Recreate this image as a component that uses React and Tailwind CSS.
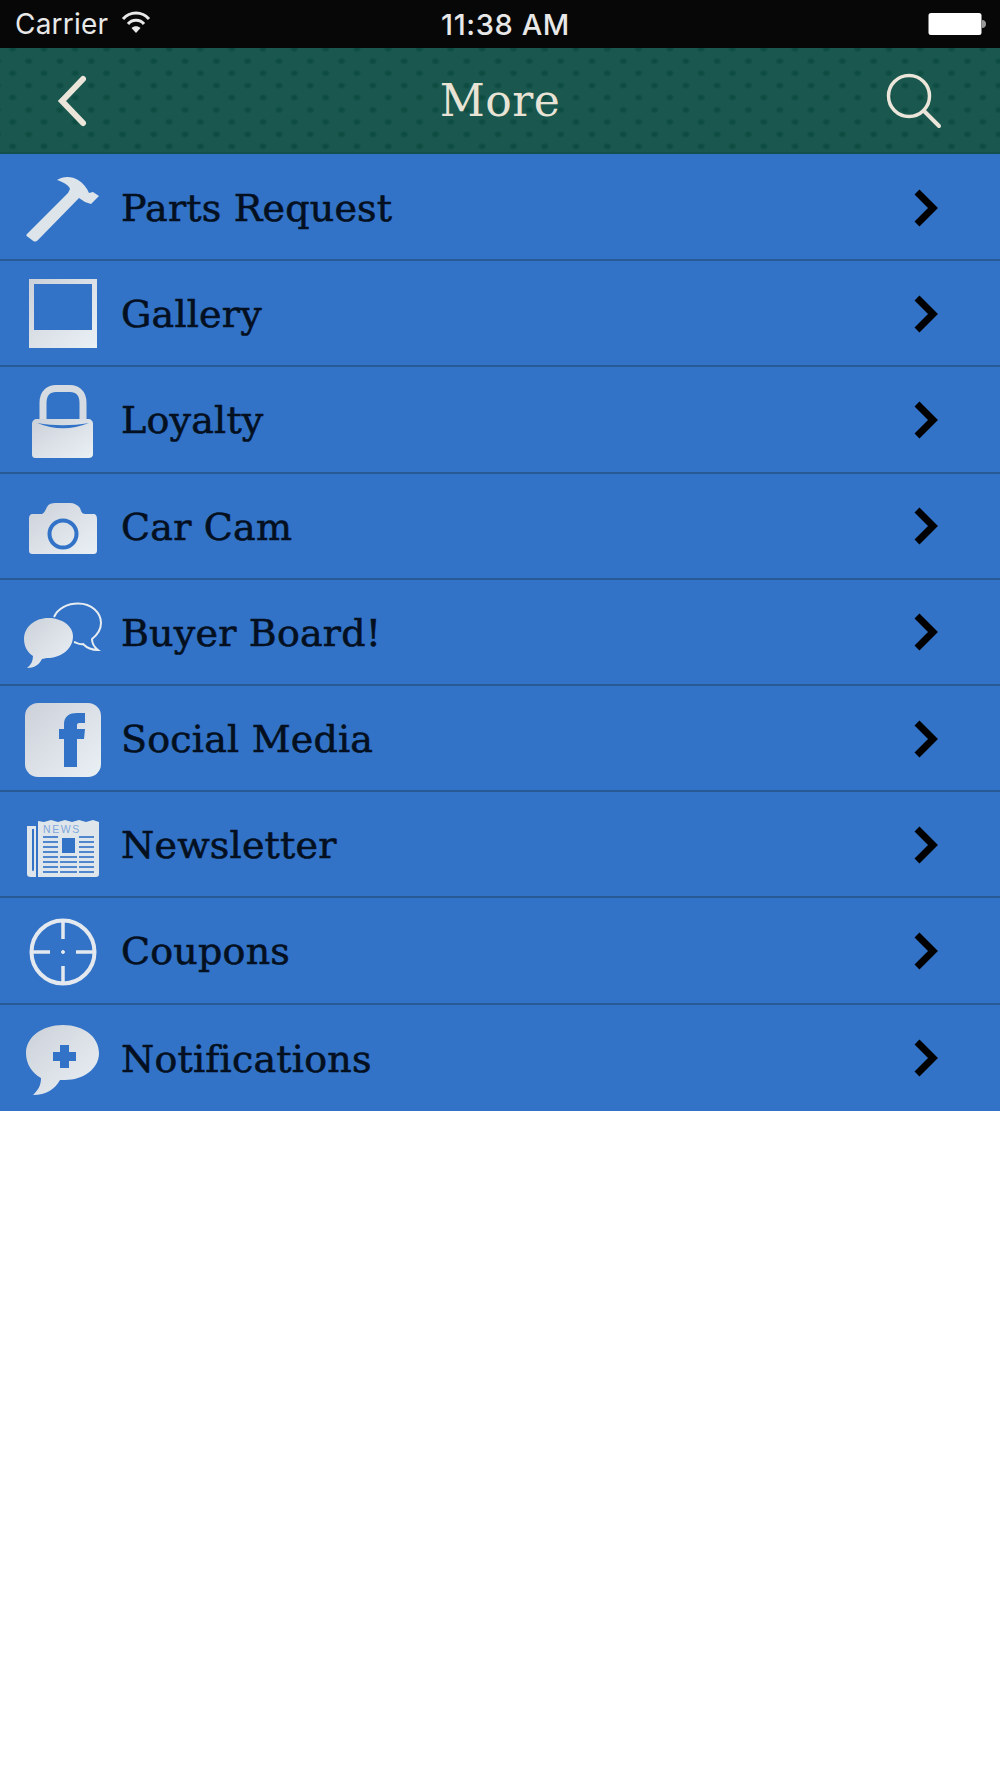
import React from "react";

const slab = "font-['DejaVu_Serif','Liberation_Serif',serif]";

function Grad({ id }) {
  return (
    <defs>
      <linearGradient id={id} x1="0" y1="0" x2="1" y2="1">
        <stop offset="0" stopColor="#ccd1d9" />
        <stop offset="1" stopColor="#eaf1f5" />
      </linearGradient>
    </defs>
  );
}

function Hammer() {
  return (
    <path
      d="M27 79 L68 38 L70 34 C69 30 63 27 57 25 C63 21 72 21 78 25 C83 28 87 33 89 38 L93 37 L99 41 L91 49 L85 47 L79 43 L38 85 C36 87 34 87 32 85 L28 82 C26 81 26 80 27 79 Z"
      fill="#dde5ea"
    />
  );
}

function Gallery() {
  return (
    <>
      <Grad id="g-gallery" />
      <path fillRule="evenodd" d="M29 18 H97 V87 H29 Z M34 23 V69 H92 V23 Z" fill="url(#g-gallery)" />
    </>
  );
}

function Lock() {
  return (
    <>
      <Grad id="g-lock" />
      <path d="M43 54 V36 C43 25 50 21.5 56 21.5 H70 C76 21.5 83 25 83 36 V54" fill="none" stroke="#d6dbe1" strokeWidth="7" />
      <path
        d="M37 52 H88 C91 52 93 54 93 57 V87 C93 90 91 91 88 91 H36 C33 91 32 90 32 87 V57 C32 54 34 52 37 52 Z"
        fill="url(#g-lock)"
      />
      <path d="M37 56 C55 63 71 63 89 56 C71 59 55 59 37 56 Z" fill="#3273c8" />
    </>
  );
}

function Camera() {
  return (
    <>
      <Grad id="g-cam" />
      <path
        d="M33 40 H42 C46 38 46 32 50 30 C52 29 54 29 57 29 H70 C74 29 78 31 80 34 C81 37 82 40 85 40 H93 C96 40 97 42 97 45 V76 C97 79 96 80 93 80 H33 C30 80 29 79 29 76 V45 C29 42 30 40 33 40 Z"
        fill="url(#g-cam)"
      />
      <circle cx="63" cy="60" r="13.5" fill="none" stroke="#3273c8" strokeWidth="4" />
    </>
  );
}

function Chat() {
  return (
    <>
      <Grad id="g-chat" />
      <path
        d="M54 37 C58 28 68 23.5 78 23.5 C92 23.5 101 33 101 43 C101 50 97 55 92 59 C92 63 94 67 98 70 C91 70 87 68 83 64 C80 65 77 63 74 62"
        fill="none"
        stroke="#e6ecf0"
        strokeWidth="2"
      />
      <path
        d="M48 38 C62 38 73 46 73 56 C73 70 60 78 47 78 L42 79 C39 85 34 88 27 88 C31 85 33 81 33 76 C27 72 24 66 24 59 C24 47 35 38 48 38 Z"
        fill="url(#g-chat)"
      />
    </>
  );
}

function Facebook() {
  return (
    <>
      <Grad id="g-fb" />
      <rect x="25" y="17" width="76" height="74" rx="13" fill="url(#g-fb)" />
      <path
        d="M64 81 V53 H59 V43 H64 V38 C64 30 70 27 77 27 H85 V37 H80 C77 37 77 38 77 40 V43 H85 L84 53 H77 V81 Z"
        fill="#3273c8"
      />
    </>
  );
}

function News() {
  const rows = [44, 49, 54, 59, 64, 69, 74, 79];
  return (
    <>
      {/* folded flap */}
      <path
        d="M27 34 H36 V85 H31 C28 85 27 84 27 82 Z M32 37 V77 C32 80 34 80 34 77 V37 Z"
        fillRule="evenodd"
        fill="#dfe6eb"
      />
      {/* sheet */}
      <path
        d="M38 29 L44 30 L51 28 L58 30 L65 28 L72 30 L79 28 L86 30 L93 28 L99 30 V82 C99 84 98 85 96 85 H38 Z"
        fill="#dfe6eb"
      />
      <text x="43" y="41" fontSize="10.5" fontFamily="Liberation Sans" fill="#7fa6da" letterSpacing="1.6">
        NEWS
      </text>
      {rows.map((y) => (
        <g key={y} fill="#4f86ce">
          <rect x="43" y={y} width="15" height="2" />
          <rect x="79" y={y} width="15" height="2" />
          {y > 61 && <rect x="60" y={y} width="17" height="2" />}
        </g>
      ))}
      <rect x="62" y="46" width="13" height="15" fill="#3273c8" />
    </>
  );
}

function Target() {
  return (
    <g stroke="#e3e9ee" strokeWidth="4" fill="none">
      <circle cx="63" cy="54" r="31.5" />
      <path d="M63 22 V41 M63 68 V85 M33 54 H50 M76 54 H93" strokeWidth="3.5" />
      <circle cx="63" cy="54" r="1.5" fill="#e3e9ee" strokeWidth="1" />
    </g>
  );
}

function Notify() {
  return (
    <>
      <Grad id="g-notif" />
      <path
        d="M63 19 C84 19 99 31 99 47 C99 63 83 74 65 74 L60 74 C55 83 46 89 33 89 C38 84 41 80 41 72 C32 67 26 58 26 47 C26 31 42 19 63 19 Z"
        fill="url(#g-notif)"
      />
      <path d="M60 39 H69 V46 H76 V55 H69 V62 H60 V55 H53 V46 H60 Z" fill="#3273c8" />
    </>
  );
}

const items = [
  { label: "Parts Request", Icon: Hammer },
  { label: "Gallery", Icon: Gallery },
  { label: "Loyalty", Icon: Lock },
  { label: "Car Cam", Icon: Camera },
  { label: "Buyer Board!", Icon: Chat },
  { label: "Social Media", Icon: Facebook },
  { label: "Newsletter", Icon: News },
  { label: "Coupons", Icon: Target },
  { label: "Notifications", Icon: Notify },
];

export default function App() {
  return (
    <div className="w-[1000px] h-[1778px] bg-white overflow-hidden">
      {/* status bar */}
      <div className="h-[48px] bg-[#070707] flex items-center justify-between pl-[15px] pr-[14px] text-[#e8e8e8] text-[29px] font-['Inter','Roboto',sans-serif] relative">
        <div className="flex items-center gap-[13px] leading-none">
          <span className="text-[28px] tracking-[0.2px]">Carrier</span>
          <svg width="30" height="24" viewBox="0 0 30 24" fill="none" stroke="#e8e8e8" strokeWidth="3" className="-mt-1">
            <path d="M2 9 C9 1 21 1 28 9" />
            <path d="M7 14 C11 9 19 9 23 14" />
            <path d="M15 23 L10.5 18 C13 15.5 17 15.5 19.5 18 Z" fill="#e8e8e8" stroke="none" />
          </svg>
        </div>
        <span className="absolute left-[441px] top-[8px] text-[29px] leading-[34px] font-medium tracking-[0.6px]">11:38 AM</span>
        <svg width="58" height="24" viewBox="0 0 58 24">
          <rect x="0.5" y="1" width="53" height="22" rx="2.5" fill="#fff" />
          <path d="M54 8 C57 8 58 10 58 12 C58 14 57 16 54 16 Z" fill="#9a9a9a" />
        </svg>
      </div>

      {/* nav bar */}
      <div className="h-[106px] bg-[#19574f] border-b-2 border-[#14504a] flex items-center justify-between relative bg-[radial-gradient(ellipse_4.5px_3.5px,#0d4c41_40%,transparent_100%),radial-gradient(ellipse_4.5px_3.5px,#0d4c41_40%,transparent_100%)] bg-[size:31.3px_24.4px] bg-[position:13px_1px,-3px_13px]">
        <svg width="121" height="104" viewBox="0 0 121 104" fill="none" stroke="#ece6da" strokeWidth="6" strokeLinecap="round">
          <path d="M83 31 L62 53 L83 75" />
        </svg>
        <span className={`absolute inset-x-0 mt-[2px] text-center text-[#e8e3d5] text-[44px] leading-[50px] tracking-[0.5px] ${slab}`}>More</span>
        <svg width="121" height="104" viewBox="880 48 121 104" fill="none" stroke="#ece6da" strokeWidth="3.5" strokeLinecap="round">
          <circle cx="910" cy="96" r="20.5" />
          <path d="M925 111 L940 126" strokeWidth="4" />
        </svg>
      </div>

      {/* menu */}
      <div className="bg-[#3273c8] pt-px">
        {items.map(({ label, Icon }) => (
          <div key={label} className="h-[106.2px] border-b-2 border-[#285a96] last:border-b-0 flex items-center text-[#04101f]">
            <svg width="121" height="104" viewBox="0 0 121 104" className="shrink-0">
              <Icon />
            </svg>
            <span className={`flex-1 mt-[2px] text-[38px] leading-[44px] tracking-[0.2px] [-webkit-text-stroke:0.6px_#04101f] ${slab}`}>{label}</span>
            <svg width="40" height="44" viewBox="0 0 40 44" fill="none" stroke="#000" strokeWidth="7" className="mr-[52px] mt-[1px]">
              <path d="M9 6 L25 22 L9 38" />
            </svg>
          </div>
        ))}
      </div>
    </div>
  );
}
